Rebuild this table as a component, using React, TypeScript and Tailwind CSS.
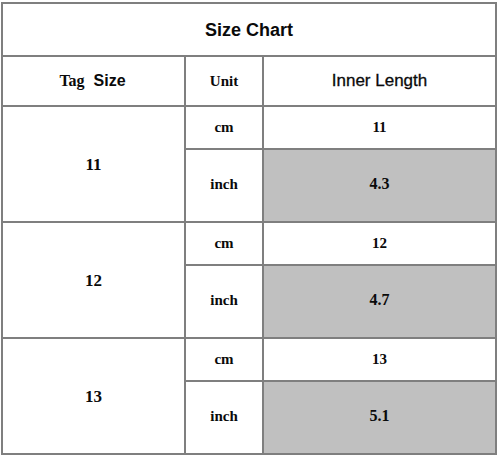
import React from 'react';

interface SizeRow {
  tag: string;
  cm: string;
  inch: string;
}

const rows: SizeRow[] = [
  { tag: '11', cm: '11', inch: '4.3' },
  { tag: '12', cm: '12', inch: '4.7' },
  { tag: '13', cm: '13', inch: '5.1' },
];

const serif = "font-['Liberation_Serif','Times_New_Roman',serif]";
const sans = "font-['Liberation_Sans',Arial,sans-serif]";

export default function App() {
  return (
    <div className="w-[500px] h-[459px] bg-white pt-[2px] pl-[1px]">
      <div
        className="grid w-[496px] h-[453px] bg-[#7f7f7f] border-2 border-[#7f7f7f] gap-[2px] text-[#0a0a0a]"
        style={{
          gridTemplateColumns: '181px 76px 231px',
          gridTemplateRows: '51px 48px 41px 71px 41px 71px 41px 71px',
        }}
      >
        {/* title */}
        <div className={`col-span-3 bg-white flex items-center justify-center pt-[1px] ${sans} font-bold text-[18px]`}>
          Size Chart
        </div>

        {/* header */}
        <div className="bg-white flex items-center justify-center font-bold text-[16px] pr-[2px]">
          <span className={serif}>Tag</span>
          <span className={`${sans} ml-[9px]`}>Size</span>
        </div>
        <div className={`bg-white flex items-center justify-center ${serif} font-bold text-[15px]`}>Unit</div>
        <div className={`bg-white flex items-center justify-center ${sans} text-[17px] [-webkit-text-stroke:0.3px_#0a0a0a]`}>
          Inner Length
        </div>

        {rows.map((r) => (
          <React.Fragment key={r.tag}>
            <div className={`row-span-2 bg-white flex items-center justify-center ${serif} font-bold text-[17px] pt-[2px]`}>
              {r.tag}
            </div>
            <div className={`bg-white flex items-center justify-center ${serif} font-bold text-[15px]`}>cm</div>
            <div className={`bg-white flex items-center justify-center ${serif} font-bold text-[15px]`}>{r.cm}</div>
            <div className={`bg-white flex items-center justify-center ${serif} font-bold text-[15px] pb-[3px]`}>inch</div>
            <div className={`bg-[#c0c0c0] flex items-center justify-center ${serif} font-bold text-[16px] pb-[3px]`}>
              {r.inch}
            </div>
          </React.Fragment>
        ))}
      </div>
    </div>
  );
}
